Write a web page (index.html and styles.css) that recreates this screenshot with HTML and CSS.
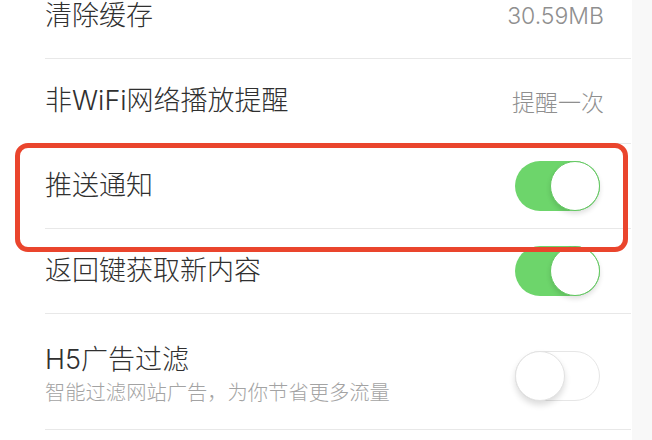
FILE: index.html
```html
<!DOCTYPE html>
<html lang="zh-CN">
<head>
<meta charset="utf-8">
<title>设置</title>
<link rel="stylesheet" href="styles.css">
</head>
<body>
<div class="page">
  <div class="list">
    <div class="row">
      <span class="label">清除缓存</span>
      <span class="value">30.59MB</span>
    </div>
    <div class="row">
      <span class="label">非WiFi网络播放提醒</span>
      <span class="value">提醒一次</span>
    </div>
    <div class="row">
      <span class="label">推送通知</span>
      <span class="toggle on"><span class="knob"></span></span>
    </div>
    <div class="row">
      <span class="label">返回键获取新内容</span>
      <span class="toggle on"><span class="knob"></span></span>
    </div>
    <div class="row tall">
      <div class="texts">
        <span class="label">H5广告过滤</span>
        <span class="sub">智能过滤网站广告，为你节省更多流量</span>
      </div>
      <span class="toggle off"><span class="knob"></span></span>
    </div>
  </div>
  <div class="highlight"></div>
</div>
</body>
</html>
```
FILE: styles.css
```css
html, body {
  margin: 0;
  padding: 0;
}
body {
  background: #f8f8f8;
  width: 652px;
  height: 440px;
  overflow: hidden;
  font-family: Inter, "Noto Sans CJK SC", sans-serif;
}
.page {
  position: relative;
  display: flow-root;
  width: 652px;
  height: 440px;
  overflow: hidden;
}
.list {
  width: 632px;
  height: 466px;
  background: #fff;
  margin-top: -26px;
}
.row {
  height: 85px;
  box-sizing: border-box;
  margin-left: 45px;
  margin-right: 1px;
  padding-right: 27px;
  border-bottom: 1px solid #e8e8e8;
  display: flex;
  align-items: center;
  justify-content: space-between;
}
.row.tall {
  height: auto;
  padding-top: 31px;
  padding-bottom: 22px;
}
.label {
  font-size: 27px;
  font-weight: 300;
  line-height: 30px;
  color: #303030;
}
.value {
  font-size: 23px;
  font-weight: 300;
  color: #8f8f8f;
}
.texts {
  display: flex;
  flex-direction: column;
  gap: 4px;
}
.sub {
  font-size: 20.3px;
  font-weight: 300;
  line-height: 28px;
  color: #a3a3a3;
}
.toggle {
  position: relative;
  width: 85px;
  height: 50px;
  border-radius: 25px;
  box-sizing: border-box;
  margin-right: 4px;
  flex-shrink: 0;
}
.toggle.on {
  background: #6dd56b;
}
.toggle.off {
  background: #fff;
  border: 1.5px solid #e6e6e6;
}
.knob {
  position: absolute;
  top: 0;
  width: 50px;
  height: 50px;
  border-radius: 50%;
  background: #fff;
  box-sizing: border-box;
}
.toggle.on .knob {
  right: 0;
  border: 1.5px solid #62c760;
  box-shadow: 0 3px 5px rgba(0, 0, 0, 0.12);
}
.toggle.off .knob {
  left: -1.5px;
  top: -1.5px;
  border: 1.5px solid #e2e2e2;
  box-shadow: 0 4px 6px rgba(0, 0, 0, 0.14);
}
.highlight {
  position: absolute;
  left: 15px;
  top: 143px;
  width: 613px;
  height: 109px;
  box-sizing: border-box;
  border: 5px solid #ea452d;
  border-radius: 13px;
}
```
